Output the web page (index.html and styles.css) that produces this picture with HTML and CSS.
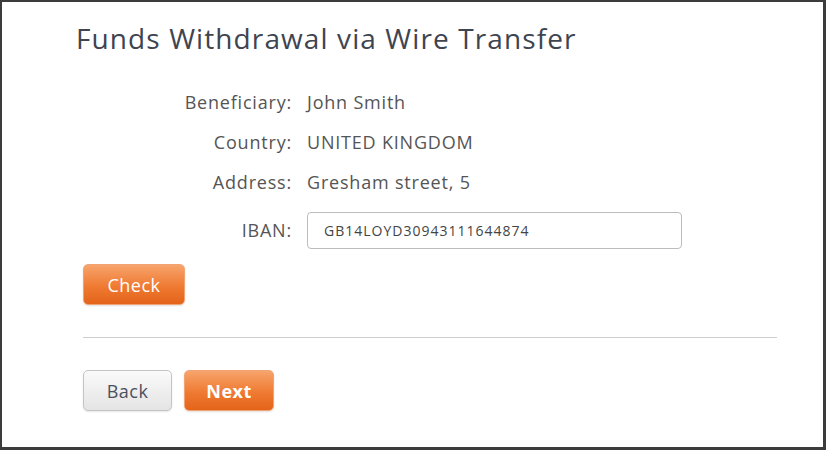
FILE: index.html
```html
<!DOCTYPE html>
<html lang="en">
<head>
  <meta charset="UTF-8">
  <title>Funds Withdrawal via Wire Transfer</title>
  <link rel="stylesheet" href="styles.css">
</head>
<body>
  <div class="frame">
    <h1>Funds Withdrawal via Wire Transfer</h1>

    <div class="details">
      <span class="label">Beneficiary:</span>
      <span class="value">John Smith</span>

      <span class="label">Country:</span>
      <span class="value">UNITED KINGDOM</span>

      <span class="label">Address:</span>
      <span class="value">Gresham street, 5</span>

      <label class="label label-iban" for="iban">IBAN:</label>
      <input type="text" id="iban" class="iban" value="GB14LOYD30943111644874">
    </div>

    <button class="btn btn-orange btn-check">Check</button>

    <hr class="divider">

    <div class="actions">
      <button class="btn btn-grey">Back</button>
      <button class="btn btn-orange btn-next">Next</button>
    </div>
  </div>
</body>
</html>
```

FILE: styles.css
```css
html, body {
  margin: 0;
  padding: 0;
  background: #fff;
}
body {
  font-family: "Open Sans", "Noto Sans", sans-serif;
  color: #555;
}
.frame {
  box-sizing: border-box;
  width: 826px;
  height: 450px;
  border: 2px solid #3c3c3c;
  border-right-width: 3px;
  border-bottom-width: 3px;
  padding: 16px 0 0 81px;
}
h1 {
  margin: 0 0 0 -7px;
  font-weight: normal;
  font-size: 28px;
  letter-spacing: 1.1px;
  color: #3e4450;
  line-height: 40px;
}
.details {
  display: grid;
  grid-template-columns: 208px 375px;
  column-gap: 16px;
  margin-top: 24px;
  align-items: center;
  font-size: 18px;
  letter-spacing: 0.8px;
}
.label {
  text-align: right;
  line-height: 40px;
  margin-right: -1px;
}
.value {
  line-height: 40px;
}
.label-iban {
  line-height: 37px;
  margin-top: 10px;
}
.iban {
  box-sizing: border-box;
  height: 37px;
  margin-top: 10px;
  border: 1px solid #bcbcbc;
  border-radius: 4px;
  padding: 0 16px;
  font-family: inherit;
  font-size: 14px;
  letter-spacing: 1px;
  color: #444;
  outline: none;
}
.btn {
  box-sizing: border-box;
  height: 41px;
  border-radius: 5px;
  font-family: inherit;
  font-size: 18px;
  letter-spacing: 0.5px;
  cursor: pointer;
  padding: 0;
}
.btn-orange {
  color: #fff;
  border: 1px solid #f0a474;
  background: linear-gradient(#f7a46c, #ef7a32 55%, #e4631a);
  box-shadow: 0 1px 2px rgba(0,0,0,0.12);
}
.btn-grey {
  color: #4a5060;
  border: 1px solid #c4c4c4;
  background: linear-gradient(#fafafa, #e4e4e4);
  box-shadow: 0 1px 2px rgba(0,0,0,0.1);
}
.btn-check {
  display: block;
  width: 102px;
  margin-top: 15px;
}
.divider {
  width: 694px;
  margin: 32px 0 0;
  border: 0;
  border-top: 1px solid #cfcfcf;
}
.actions {
  display: flex;
  gap: 12px;
  margin-top: 32px;
}
.actions .btn-grey {
  width: 89px;
}
.btn-next {
  width: 90px;
  font-weight: bold;
}
```
